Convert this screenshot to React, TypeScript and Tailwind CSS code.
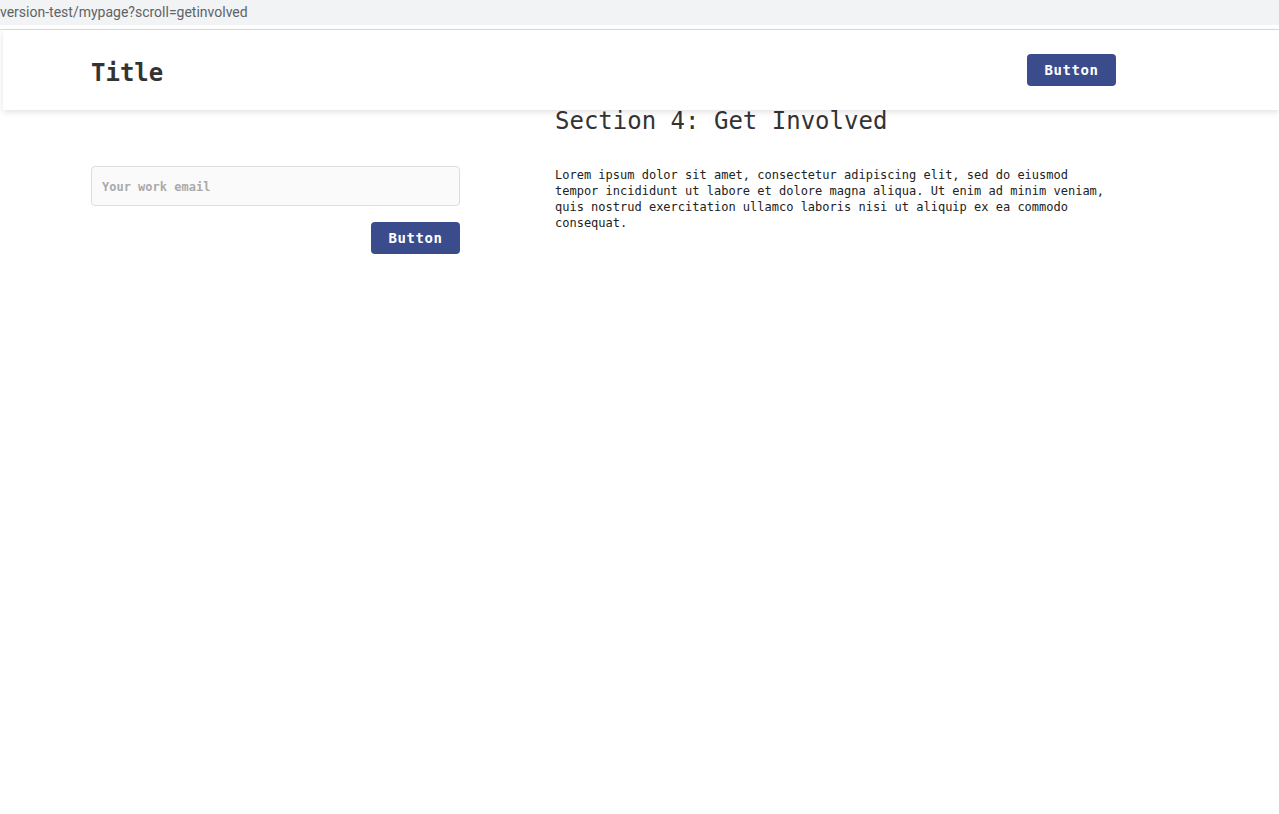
const mono = "font-['DejaVu_Sans_Mono','Liberation_Mono',monospace]";

function PrimaryButton({ label }: { label: string }) {
  return (
    <button
      type="button"
      className={`${mono} flex h-[32px] w-[89px] items-center justify-center rounded-[4px] bg-[#3b4c8c] pt-[1px] text-[14px] font-bold tracking-[0.04em] text-white`}
    >
      {label}
    </button>
  );
}

export default function App() {
  return (
    <div className="min-h-[814px] w-full overflow-hidden bg-white">
      {/* browser address strip */}
      <div className="flex h-[25px] items-center bg-[#f1f3f4]">
        <span className="whitespace-nowrap font-['Roboto','Noto_Sans',sans-serif] text-[14px] text-[#5f6368]">
          version-test/mypage?scroll=getinvolved
        </span>
      </div>
      <div className="h-[4px] bg-white" />
      <div className="h-[1px] bg-[#dadce0]" />

      {/* header */}
      <header className="relative z-10 ml-[3px] flex h-[80px] items-center justify-between bg-white pl-[88px] pr-[163px] shadow-[0_2px_6px_rgba(0,0,0,0.12)]">
        <h1 className={`${mono} pt-[6px] text-[24px] font-semibold leading-[28px] text-[#333333]`}>
          Title
        </h1>
        <PrimaryButton label="Button" />
      </header>

      {/* section */}
      <main className="flex items-start pl-[91px]">
        <div className="mt-[56px] flex w-[369px] flex-col items-end gap-[16px]">
          <input
            type="email"
            placeholder="Your work email"
            className={`${mono} h-[40px] w-full rounded-[4px] border border-[#dddddd] bg-[#fafafa] px-[10px] pt-[2px] text-[12px] font-bold text-[#333] outline-none placeholder:text-[#aaaaaa]`}
          />
          <PrimaryButton label="Button" />
        </div>

        <div className="-mt-[3px] ml-[95px] w-[561px]">
          <h2 className={`${mono} text-[24px] font-medium leading-[28px] text-[#333333]`}>
            Section 4: Get Involved
          </h2>
          <p className={`${mono} mt-[32px] text-[12px] leading-[16px] text-[#222222]`}>
            Lorem ipsum dolor sit amet, consectetur adipiscing elit, sed do eiusmod tempor
            incididunt ut labore et dolore magna aliqua. Ut enim ad minim veniam, quis nostrud
            exercitation ullamco laboris nisi ut aliquip ex ea commodo consequat.
          </p>
        </div>
      </main>
    </div>
  );
}
